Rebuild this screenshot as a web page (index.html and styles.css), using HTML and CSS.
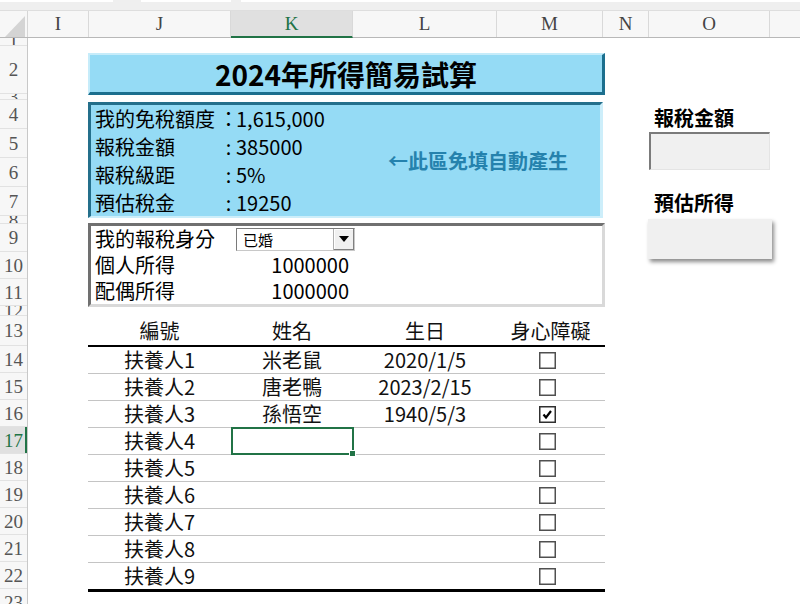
FILE: index.html
```html
<!DOCTYPE html>
<html lang="zh-Hant">
<head>
<meta charset="utf-8">
<title>2024年所得簡易試算</title>
<link rel="stylesheet" href="styles.css">
</head>
<body>
<div class="app">
  <div class="topbar"><span class="tab t1"></span><span class="tab t2"></span><span class="tab t3"></span></div>
  <div class="colhead">
    <div class="corner"><svg width="28" height="28" viewBox="0 0 28 28"><polygon points="5,26 25,26 25,5" fill="#d4d4d4"/></svg></div>
    <div class="ch w-i">I</div>
    <div class="ch w-j">J</div>
    <div class="ch w-k sel">K</div>
    <div class="ch w-l">L</div>
    <div class="ch w-m">M</div>
    <div class="ch w-n">N</div>
    <div class="ch w-o">O</div>
    <div class="ch rest"></div>
  </div>
  <div class="sheet">
    <div class="rowhead">
      <div class="rh h8">1</div>
      <div class="rh h48">2</div>
      <div class="rh h6">3</div>
      <div class="rh h29">4</div>
      <div class="rh h29">5</div>
      <div class="rh h29">6</div>
      <div class="rh h29">7</div>
      <div class="rh h8">8</div>
      <div class="rh h28">9</div>
      <div class="rh h27">10</div>
      <div class="rh h27">11</div>
      <div class="rh h10">12</div>
      <div class="rh h30">13</div>
      <div class="rh h27">14</div>
      <div class="rh h27">15</div>
      <div class="rh h27">16</div>
      <div class="rh h27 sel">17</div>
      <div class="rh h27">18</div>
      <div class="rh h27">19</div>
      <div class="rh h27">20</div>
      <div class="rh h27">21</div>
      <div class="rh h27">22</div>
      <div class="rh h27">23</div>
    </div>
    <div class="cells">
      <div class="main">
        <div class="title">2024年所得簡易試算</div>
        <div class="info">
          <div class="lines">
            <div class="line"><span class="lbl">我的免稅額度</span><span class="colon">：</span><span class="val">1,615,000</span></div>
            <div class="line"><span class="lbl">報稅金額</span><span class="colon">:</span><span class="val">385000</span></div>
            <div class="line"><span class="lbl">報稅級距</span><span class="colon">:</span><span class="val">5%</span></div>
            <div class="line"><span class="lbl">預估稅金</span><span class="colon">:</span><span class="val">19250</span></div>
          </div>
          <div class="note">←此區免填自動產生</div>
        </div>
        <div class="inputs">
          <div class="iline"><span class="ilbl">我的報稅身分</span>
            <span class="dropdown"><span class="dd-text">已婚</span><span class="dd-btn"><svg width="10" height="6" viewBox="0 0 10 6"><polygon points="0,0 10,0 5,6" fill="#000"/></svg></span></span>
          </div>
          <div class="iline"><span class="ilbl">個人所得</span><span class="inum">1000000</span></div>
          <div class="iline"><span class="ilbl">配偶所得</span><span class="inum">1000000</span></div>
        </div>
        <div class="table">
          <div class="trow thead"><div class="td">編號</div><div class="td">姓名</div><div class="td">生日</div><div class="td">身心障礙</div></div>
          <div class="trow"><div class="td">扶養人1</div><div class="td">米老鼠</div><div class="td">2020/1/5</div><div class="td"><svg class="chk" width="17" height="17" viewBox="0 0 17 17"><rect x="0.75" y="0.75" width="15.5" height="15.5" fill="#fff" stroke="#505050" stroke-width="1.5"/></svg></div></div>
          <div class="trow"><div class="td">扶養人2</div><div class="td">唐老鴨</div><div class="td">2023/2/15</div><div class="td"><svg class="chk" width="17" height="17" viewBox="0 0 17 17"><rect x="0.75" y="0.75" width="15.5" height="15.5" fill="#fff" stroke="#505050" stroke-width="1.5"/></svg></div></div>
          <div class="trow"><div class="td">扶養人3</div><div class="td">孫悟空</div><div class="td">1940/5/3</div><div class="td"><svg class="chk" width="17" height="17" viewBox="0 0 17 17"><rect x="0.75" y="0.75" width="15.5" height="15.5" fill="#fff" stroke="#303030" stroke-width="1.5"/><polyline points="4.5,8.5 7,11.5 12,5" fill="none" stroke="#000" stroke-width="2.2"/></svg></div></div>
          <div class="trow"><div class="td">扶養人4</div><div class="td selcell"></div><div class="td"></div><div class="td"><svg class="chk" width="17" height="17" viewBox="0 0 17 17"><rect x="0.75" y="0.75" width="15.5" height="15.5" fill="#fff" stroke="#505050" stroke-width="1.5"/></svg></div></div>
          <div class="trow"><div class="td">扶養人5</div><div class="td"></div><div class="td"></div><div class="td"><svg class="chk" width="17" height="17" viewBox="0 0 17 17"><rect x="0.75" y="0.75" width="15.5" height="15.5" fill="#fff" stroke="#505050" stroke-width="1.5"/></svg></div></div>
          <div class="trow"><div class="td">扶養人6</div><div class="td"></div><div class="td"></div><div class="td"><svg class="chk" width="17" height="17" viewBox="0 0 17 17"><rect x="0.75" y="0.75" width="15.5" height="15.5" fill="#fff" stroke="#505050" stroke-width="1.5"/></svg></div></div>
          <div class="trow"><div class="td">扶養人7</div><div class="td"></div><div class="td"></div><div class="td"><svg class="chk" width="17" height="17" viewBox="0 0 17 17"><rect x="0.75" y="0.75" width="15.5" height="15.5" fill="#fff" stroke="#505050" stroke-width="1.5"/></svg></div></div>
          <div class="trow"><div class="td">扶養人8</div><div class="td"></div><div class="td"></div><div class="td"><svg class="chk" width="17" height="17" viewBox="0 0 17 17"><rect x="0.75" y="0.75" width="15.5" height="15.5" fill="#fff" stroke="#505050" stroke-width="1.5"/></svg></div></div>
          <div class="trow last"><div class="td">扶養人9</div><div class="td"></div><div class="td"></div><div class="td"><svg class="chk" width="17" height="17" viewBox="0 0 17 17"><rect x="0.75" y="0.75" width="15.5" height="15.5" fill="#fff" stroke="#505050" stroke-width="1.5"/></svg></div></div>
        </div>
      </div>
      <div class="side">
        <div class="slabel first">報稅金額</div>
        <div class="sbox inset"></div>
        <div class="slabel second">預估所得</div>
        <div class="sbox raised"></div>
      </div>
    </div>
  </div>
</div>
</body>
</html>
```
FILE: styles.css
```css
* { box-sizing: border-box; }
html, body { margin: 0; padding: 0; }
body {
  width: 800px;
  height: 604px;
  overflow: hidden;
  background: #fff;
  font-family: "Noto Sans CJK TC", "Noto Sans", sans-serif;
  color: #000;
}
.app { width: 800px; height: 604px; overflow: hidden; display: flex; flex-direction: column; }

.topbar {
  height: 10px;
  background: #efefef;
  display: flex;
  flex-shrink: 0;
}
.tab { height: 2px; background: #fff; }
.t1 { width: 113px; }
.t2 { width: 90px; margin-left: 28px; }
.t3 { flex: 1; margin-left: 10px; }

.colhead {
  height: 28px;
  flex-shrink: 0;
  display: flex;
  background: #f7f7f7;
  border-top: 1px solid #dedede;
  border-bottom: 1px solid #b8b8b8;
}
.corner { width: 28px; border-right: 1px solid #d6d6d6; }
.corner svg { display: block; }
.ch {
  border-right: 1px solid #d9d9d9;
  display: flex;
  align-items: center;
  justify-content: center;
  font-family: "Liberation Serif", serif;
  font-size: 19px;
  color: #444;
}
.ch.sel {
  background: #e0e0e0;
  color: #217346;
  border-bottom: 2px solid #217346;
  margin-bottom: -1px;
}
.w-i { width: 61px; }
.w-j { width: 142px; }
.w-k { width: 122px; }
.w-l { width: 144px; }
.w-m { width: 106px; }
.w-n { width: 46px; }
.w-o { width: 121px; }
.rest { flex: 1; border-right: none; }

.sheet { flex: 1; display: flex; min-height: 0; }
.rowhead {
  width: 28px;
  flex-shrink: 0;
  background: #f7f7f7;
  border-right: 1px solid #c8c8c8;
  display: flex;
  flex-direction: column;
}
.rh {
  flex-shrink: 0;
  overflow: hidden;
  display: flex;
  align-items: center;
  justify-content: center;
  font-family: "Liberation Serif", serif;
  font-size: 19px;
  line-height: 19px;
  color: #555;
  border-bottom: 1px solid #e2e2e2;
}
.rh.sel {
  background: #e0e0e0;
  color: #217346;
  box-shadow: inset -2px 0 0 #217346;
}
.h6 { height: 6px; }
.h8 { height: 8px; }
.h10 { height: 10px; }
.h27 { height: 27px; }
.h28 { height: 28px; }
.h29 { height: 29px; }
.h30 { height: 30px; }
.h48 { height: 48px; }

.cells { flex: 1; display: flex; align-items: flex-start; }
.main { margin-left: 60px; width: 517px; display: flex; flex-direction: column; }

.title {
  margin-top: 15px;
  height: 42px;
  background: #95dbf5;
  border-top: 2px solid #c6ecfa;
  border-left: 2px solid #c6ecfa;
  border-right: 3px solid #1c6f8e;
  border-bottom: 3px solid #1c6f8e;
  display: flex;
  align-items: center;
  justify-content: center;
  font-size: 28px;
  font-weight: 700;
  line-height: 1;
}

.info {
  margin-top: 7px;
  height: 116px;
  width: 515px;
  background: #95dbf5;
  border-top: 3px solid #246f8b;
  border-left: 3px solid #246f8b;
  border-right: 3px solid #cdeefa;
  border-bottom: 2px solid #cdeefa;
  padding-left: 4px;
  display: flex;
}
.lines { width: 290px; display: flex; flex-direction: column; }
.line { height: 28px; display: flex; align-items: center; font-size: 20px; line-height: 28px; white-space: nowrap; }
.lbl { width: 126px; flex-shrink: 0; }
.colon { width: 15px; flex-shrink: 0; display: flex; justify-content: center; }
.note {
  margin-left: 3px;
  align-self: center;
  font-size: 20px;
  font-weight: 700;
  color: #2582ad;
  white-space: nowrap;
  line-height: 28px;
}

.inputs {
  margin-top: 5px;
  height: 84px;
  border-top: 3px solid #707070;
  border-left: 3px solid #707070;
  border-right: 3px solid #d9d9d9;
  border-bottom: 3px solid #d9d9d9;
  padding-left: 4px;
  display: flex;
  flex-direction: column;
}
.iline { height: 26px; display: flex; align-items: center; font-size: 20px; line-height: 26px; white-space: nowrap; }
.iline:first-child { height: 27px; }
.ilbl { width: 141px; flex-shrink: 0; }
.inum { width: 113px; text-align: right; }
.dropdown {
  width: 119px;
  height: 23px;
  display: flex;
  background: #fff;
  border-top: 1px solid #7a7a7a;
  border-left: 1px solid #7a7a7a;
  border-right: 1px solid #c8c8c8;
  border-bottom: 1px solid #c8c8c8;
}
.dd-text { flex: 1; font-size: 15px; line-height: 21px; padding-left: 6px; }
.dd-btn {
  width: 21px;
  background: #f0f0f0;
  border-left: 1px solid #b0b0b0;
  box-shadow: inset -1px -1px 0 #808080, inset 1px 1px 0 #fff;
  display: flex;
  align-items: center;
  justify-content: center;
}
.dd-btn svg { display: block; }

.table { margin-top: 9px; display: flex; flex-direction: column; }
.trow {
  display: grid;
  grid-template-columns: 143px 122px 144px 107px;
  height: 27px;
  border-bottom: 1px solid #c4c4c4;
}
.trow.thead { height: 31px; border-bottom: 2px solid #000; }
.trow.last { height: 29px; border-bottom: 3px solid #000; }
.td {
  display: flex;
  align-items: center;
  justify-content: center;
  font-size: 20px;
  line-height: 26px;
  color: #111;
  white-space: nowrap;
}
.chk { display: block; margin-right: 6px; }
.selcell { position: relative; }
.selcell::before {
  content: "";
  position: absolute;
  left: 0;
  top: -1px;
  right: -1px;
  bottom: -1px;
  border: 2px solid #217346;
}
.selcell::after {
  content: "";
  position: absolute;
  right: -3px;
  bottom: -3px;
  width: 5px;
  height: 5px;
  background: #217346;
  border: 1px solid #fff;
}

.side { margin-left: 43px; width: 125px; display: flex; flex-direction: column; }
.slabel {
  height: 24px;
  line-height: 24px;
  font-size: 20px;
  font-weight: 700;
  padding-left: 6px;
  white-space: nowrap;
}
.slabel.first { margin-top: 68px; }
.slabel.second { margin-top: 21px; }
.sbox { background: #f0f0f0; }
.sbox.inset {
  margin-top: 2px;
  margin-left: 1px;
  width: 121px;
  height: 38px;
  border-top: 2px solid #7b7b7b;
  border-left: 2px solid #7b7b7b;
  border-right: 1px solid #e4e4e4;
  border-bottom: 1px solid #e4e4e4;
}
.sbox.raised {
  margin-top: 4px;
  width: 124px;
  height: 40px;
  box-shadow: 2px 3px 4px rgba(0, 0, 0, 0.45);
}
```
